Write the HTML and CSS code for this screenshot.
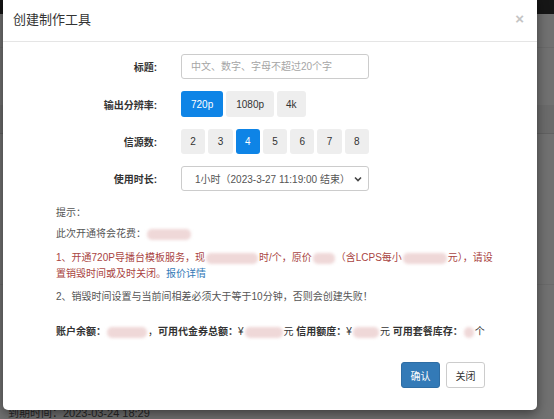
FILE: index.html
```html
<!DOCTYPE html>
<html lang="zh-CN">
<head>
  <meta charset="UTF-8">
  <link rel="stylesheet" href="styles.css">
</head>
<body>

  <div class="page">
    <div class="topbar"></div>
    <div class="page-body">
      <div class="page-row r1"></div>
      <div class="page-row r2"></div>
      <div class="page-row r3"></div>
      <div class="page-row r4"></div>
      <div class="page-row r5"></div>
      <p class="expire">到期时间：2023-03-24 18:29</p>
    </div>
  </div>

  <div class="modal">
    <div class="modal-header">
      <h4 class="modal-title">创建制作工具</h4>
      <span class="close">&times;</span>
    </div>

    <div class="modal-body">
      <div class="form">
        <label class="form-label">标题:</label>
        <div class="form-ctrl">
          <input type="text" class="text-input" placeholder="中文、数字、字母不超过20个字">
        </div>

        <label class="form-label">输出分辨率:</label>
        <div class="form-ctrl btn-row">
          <span class="opt active">720p</span>
          <span class="opt">1080p</span>
          <span class="opt">4k</span>
        </div>

        <label class="form-label">信源数:</label>
        <div class="form-ctrl num-row">
          <span class="opt">2</span>
          <span class="opt">3</span>
          <span class="opt active">4</span>
          <span class="opt">5</span>
          <span class="opt">6</span>
          <span class="opt">7</span>
          <span class="opt">8</span>
        </div>

        <label class="form-label">使用时长:</label>
        <div class="form-ctrl">
          <div class="select">
            <span>1小时（2023-3-27 11:19:00 结束）</span>
            <svg width="8" height="6" viewBox="0 0 8 6"><path d="M1 1.5 L4 4.5 L7 1.5" fill="none" stroke="#444" stroke-width="1.6"/></svg>
          </div>
        </div>
      </div>

      <!-- redacted amounts are drawn as blurred blocks, like the screenshot -->
      <div class="tips">
        <p>提示：</p>
        <p class="cost">此次开通将会花费：<span class="blur w44"></span></p>
        <p class="warn">1、开通720P导播台模板服务，现<span class="blur w52"></span>时/个，原价<span class="blur w22"></span>（含LCPS每小<span class="blur w44"></span>元），请设置销毁时间或及时关闭。<a href="#" class="link">报价详情</a></p>
        <p>2、销毁时间设置与当前间相差必须大于等于10分钟，否则会创建失败！</p>
        <p class="account">
          <b>账户余额：</b><span class="blur w40"></span>，<b>可用代金券总额：</b>¥<span class="blur w38"></span>元 <b>信用额度：</b>¥<span class="blur w26"></span>元 <b>可用套餐库存：</b><span class="blur w10"></span>个
        </p>
      </div>
    </div>

    <div class="modal-footer">
      <button class="btn btn-primary">确认</button>
      <button class="btn btn-default">关闭</button>
    </div>
  </div>

</body>
</html>
```

FILE: styles.css
```css
body {
  margin: 0;
  padding: 0;
  width: 554px;
  height: 419px;
  overflow: hidden;
  font-family: 'Liberation Sans', 'Noto Sans CJK SC', sans-serif;
  font-size: 10px;
  color: #333;
  background: #717171;
  position: relative;
}

/* page behind the backdrop */
.page {
  height: 419px;
}

.topbar {
  height: 14px;
  background: #161616;
}

.page-row {
  border-bottom: 1px solid #6a6a6a;
}

.page-row.r1 { height: 33px; }
.page-row.r2 { height: 57px; border-bottom: none; }
.page-row.r3 { height: 28px; background: #6b6b6b; border-bottom-color: #616161; }
.page-row.r4 { height: 150px; }
.page-row.r5 { height: 122px; border-bottom: none; }

.expire {
  margin: 0;
  padding-left: 8px;
  font-size: 11px;
  line-height: 13px;
  color: #262626;
}

/* modal */
.modal {
  position: absolute;
  left: 3px;
  top: -5px;
  width: 534px;
  background: #fff;
  border-radius: 5px;
  box-shadow: 0 4px 12px rgba(0, 0, 0, 0.45);
}

.modal-header {
  display: flex;
  justify-content: space-between;
  align-items: flex-start;
  padding: 14px 13px 11px 10px;
  border-bottom: 1px solid #e5e5e5;
}

.modal-title {
  margin: 0;
  font-size: 13px;
  font-weight: normal;
  line-height: 21px;
  color: #333;
}

.close {
  font-size: 15px;
  font-weight: bold;
  line-height: 15px;
  margin-top: 2px;
  color: #c4c4c4;
}

.modal-body {
  padding-top: 12px;
}

.form {
  display: grid;
  grid-template-columns: 154px 188px;
  column-gap: 24px;
  row-gap: 12px;
  align-items: center;
}

.form-label {
  text-align: right;
  font-weight: bold;
  color: #333;
}

.text-input {
  box-sizing: border-box;
  width: 188px;
  height: 25px;
  border: 1px solid #ccc;
  border-radius: 3px;
  padding: 0 9px;
  font-family: inherit;
  font-size: 10px;
  color: #555;
  outline: none;
}

.text-input::placeholder {
  color: #a5a5a5;
}

.btn-row {
  display: flex;
  gap: 3px;
}

.btn-row .opt {
  height: 26px;
  padding: 0 10px;
}

.btn-row .opt:last-child {
  padding: 0 9px;
}

.num-row {
  display: flex;
  gap: 3px;
}

.num-row .opt {
  flex: 1;
  height: 25px;
  justify-content: center;
}

.opt {
  display: flex;
  align-items: center;
  background: #eee;
  border-radius: 3px;
  color: #333;
  font-size: 10px;
}

.opt.active {
  background: #0e84e6;
  color: #fff;
}

.select {
  box-sizing: border-box;
  height: 25px;
  border: 1px solid #ccc;
  border-radius: 3px;
  display: flex;
  align-items: center;
  justify-content: space-between;
  padding: 0 6px 0 13px;
  color: #555;
}

.tips {
  margin: 14px 0 0 53px;
  width: 438px;
  color: #555;
}

.tips p {
  margin: 0 0 7px;
  line-height: 16px;
}

.tips p:first-child {
  margin-bottom: 5px;
}

.tips p.cost {
  margin-bottom: 8px;
}

.tips .warn {
  color: #a94442;
}

.tips .link {
  color: #337ab7;
  text-decoration: none;
}

.tips .account {
  margin: 19px 0 0;
  color: #333;
}

.account b {
  font-weight: bold;
}

.blur {
  display: inline-block;
  vertical-align: top;
  height: 11px;
  margin: 3px 1px 0;
  background: #efd8d8;
  border-radius: 5px;
  filter: blur(1.5px);
}

.w10 { width: 10px; }
.w22 { width: 22px; }
.w26 { width: 26px; }
.w38 { width: 38px; }
.w40 { width: 40px; }
.w44 { width: 44px; }
.w52 { width: 52px; }

.modal-footer {
  display: flex;
  justify-content: flex-end;
  gap: 6px;
  padding: 22px 52px 22px 0;
}

.btn {
  width: 39px;
  height: 26px;
  border-radius: 3px;
  font-family: inherit;
  font-size: 10px;
  padding: 0;
  cursor: pointer;
}

.btn-primary {
  background: #337ab7;
  border: 1px solid #2e6da4;
  color: #fff;
}

.btn-default {
  background: #fff;
  border: 1px solid #ccc;
  color: #333;
}
```
